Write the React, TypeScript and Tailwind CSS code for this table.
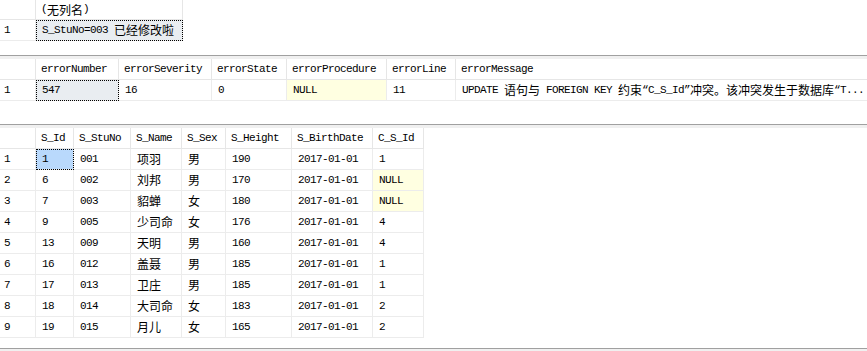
const CJK = /([\u2E80-\u9FFF\u3000-\u303F\uFF00-\uFFEF]+)/;

function Txt({ s }: { s: string }) {
  return (
    <>
      {s.split(CJK).map((p, i) =>
        p === "" ? null : CJK.test(p) ? (
          <span key={i} className="font-['Noto_Sans_CJK_SC',sans-serif] text-[12px] tracking-normal">
            {p}
          </span>
        ) : (
          <span key={i} className="font-['Liberation_Mono',monospace] text-[11px] tracking-[-0.6px] whitespace-pre">
            {p}
          </span>
        )
      )}
    </>
  );
}

type Cell = { v: string; sel?: "gray" | "blue"; nul?: boolean };

function Grid({
  widths,
  headers,
  rows,
  headH = "h-[21px]",
}: {
  widths: string[];
  headers: string[];
  rows: Cell[][];
  headH?: string;
}) {
  return (
    <div className="flex flex-col text-black">
      <div className={`flex ${headH}`}>
        <div className="w-[36px] shrink-0 border-r border-b border-[#e6e6e6]" />
        {headers.map((h, i) => (
          <div
            key={i}
            className={`${widths[i]} shrink-0 flex items-center pl-[5px] border-r border-b border-[#e6e6e6] leading-none overflow-hidden whitespace-nowrap`}
          >
            <Txt s={h} />
          </div>
        ))}
      </div>
      {rows.map((r, ri) => (
        <div key={ri} className="flex h-[21px]">
          <div className="w-[36px] shrink-0 flex items-center pl-[4px] border-r border-b border-[#ececec] leading-none">
            <Txt s={String(ri + 1)} />
          </div>
          {r.map((c, ci) => (
            <div
              key={ci}
              className={`${widths[ci]} shrink-0 flex items-center pl-[6px] border-r border-b border-[#ececec] leading-none overflow-hidden whitespace-nowrap ${
                c.sel === "gray"
                  ? "bg-[#e9edf1] outline-1 outline-dotted outline-black -outline-offset-1"
                  : c.sel === "blue"
                  ? "bg-[#b9d9fc] outline-1 outline-dotted outline-black -outline-offset-1"
                  : c.nul
                  ? "bg-[#ffffe1]"
                  : ""
              }`}
            >
              <Txt s={c.v} />
            </div>
          ))}
        </div>
      ))}
    </div>
  );
}

function Splitter() {
  return <div className="h-[4px] shrink-0 border-t border-[#a0a0a0] bg-[#f0f0f0]" />;
}

const students: string[][] = [
  ["1", "001", "项羽", "男", "190", "2017-01-01", "1"],
  ["6", "002", "刘邦", "男", "170", "2017-01-01", "NULL"],
  ["7", "003", "貂蝉", "女", "180", "2017-01-01", "NULL"],
  ["9", "005", "少司命", "女", "176", "2017-01-01", "4"],
  ["13", "009", "天明", "男", "160", "2017-01-01", "4"],
  ["16", "012", "盖聂", "男", "185", "2017-01-01", "1"],
  ["17", "013", "卫庄", "男", "185", "2017-01-01", "1"],
  ["18", "014", "大司命", "女", "183", "2017-01-01", "2"],
  ["19", "015", "月儿", "女", "165", "2017-01-01", "2"],
];

export default function App() {
  return (
    <div className="w-[867px] h-[351px] bg-white flex flex-col overflow-hidden">
      <div className="h-[55px] shrink-0">
        <Grid
          headH="h-[20px]"
          widths={["w-[147px]"]}
          headers={["(无列名)"]}
          rows={[[{ v: "S_StuNo=003 已经修改啦", sel: "gray" }]]}
        />
      </div>
      <Splitter />
      <div className="h-[65px] shrink-0">
        <Grid
          widths={["w-[83px]", "w-[93px]", "w-[75px]", "w-[100px]", "w-[69px]", "w-[411px] !border-r-0"]}
          headers={["errorNumber", "errorSeverity", "errorState", "errorProcedure", "errorLine", "errorMessage"]}
          rows={[
            [
              { v: "547", sel: "gray" },
              { v: "16" },
              { v: "0" },
              { v: "NULL", nul: true },
              { v: "11" },
              { v: "UPDATE 语句与 FOREIGN KEY 约束“C_S_Id”冲突。该冲突发生于数据库“T..." },
            ],
          ]}
        />
      </div>
      <Splitter />
      <div className="h-[220px] shrink-0">
        <Grid
          widths={["w-[38px]", "w-[57px]", "w-[51px]", "w-[44px]", "w-[66px]", "w-[81px]", "w-[51px]"]}
          headers={["S_Id", "S_StuNo", "S_Name", "S_Sex", "S_Height", "S_BirthDate", "C_S_Id"]}
          rows={students.map((r, ri) =>
            r.map((v, ci) => ({
              v,
              sel: ri === 0 && ci === 0 ? ("blue" as const) : undefined,
              nul: v === "NULL",
            }))
          )}
        />
      </div>
      <Splitter />
      <div className="flex-1 bg-[#f0f0f0]" />
    </div>
  );
}
